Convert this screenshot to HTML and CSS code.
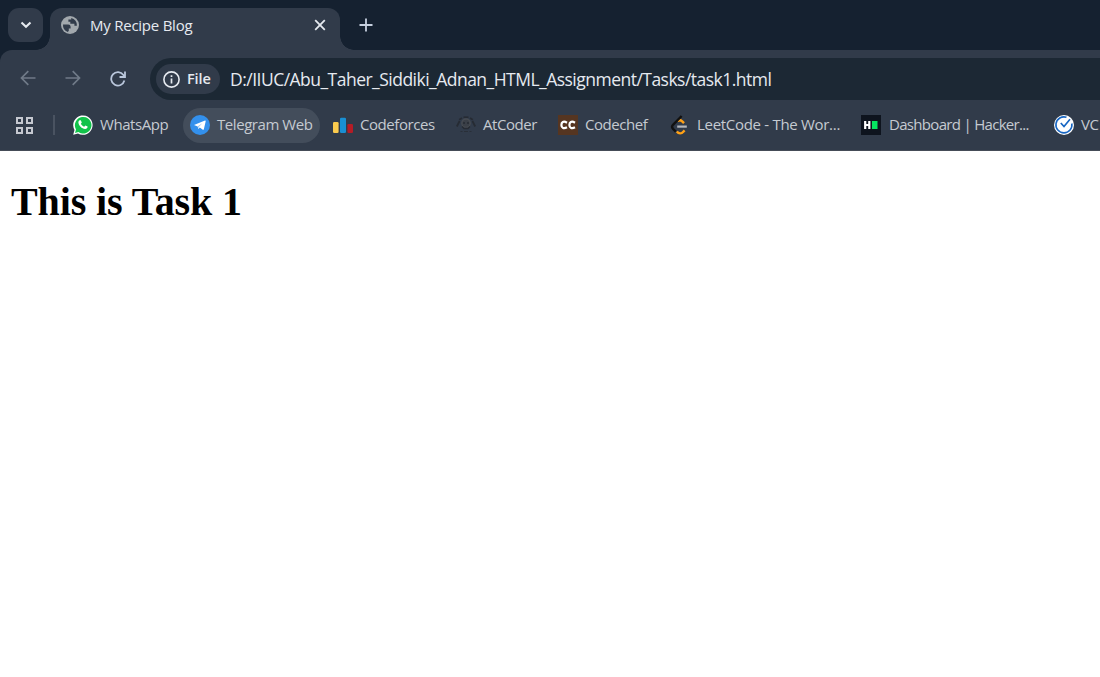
FILE: index.html
```html
<!DOCTYPE html>
<html lang="en">
<head>
<meta charset="utf-8">
<title>My Recipe Blog</title>
<link rel="stylesheet" href="styles.css">
</head>
<body>
<header class="browser">
  <div class="tabstrip">
    <button class="tab-search" aria-label="Search tabs">
      <svg width="12" height="8" viewBox="0 0 12 8"><path d="M1.5 1.5 6 5.8l4.5-4.3" fill="none" stroke="#e6eaf0" stroke-width="2.1"/></svg>
    </button>
    <div class="tab">
      <svg class="globe" width="18" height="18" viewBox="0 0 18 18"><circle cx="9" cy="9" r="9" fill="#a2a8ad"/><path d="M2 8.6h5.2c1.8 0 2.4.9 2.4 2.4v1.4H7.8v2.4l-1 1.2A7.3 7.3 0 0 1 2 8.6ZM10.2 2v1.6H7.4v2.2h1.9v2h4.1v2h2.5A7.3 7.3 0 0 0 10.2 2Z" fill="#313b4a"/></svg>
      <span class="tab-title">My Recipe Blog</span>
      <svg class="close" width="12" height="12" viewBox="0 0 12 12"><path d="m1.2 1.2 9.6 9.6m0-9.6-9.6 9.6" stroke="#e6eaf0" stroke-width="1.8"/></svg>
    </div>
    <svg class="new-tab" width="14" height="14" viewBox="0 0 14 14"><path d="M7 .5v13M.5 7h13" stroke="#c6d0df" stroke-width="1.8"/></svg>
  </div>

  <div class="toolbar">
    <svg class="nav" width="16" height="16" viewBox="0 0 16 16"><path d="M15.5 8H1.8M8.3 1.2 1.5 8l6.8 6.8" fill="none" stroke="#707a88" stroke-width="1.7"/></svg>
    <svg class="nav" width="16" height="16" viewBox="0 0 16 16"><path d="M.5 8h13.7M7.7 1.2 14.5 8l-6.8 6.8" fill="none" stroke="#707a88" stroke-width="1.7"/></svg>
    <svg class="reload" width="16" height="16" viewBox="0 0 16 16"><path d="M14.4 9.6A6.7 6.7 0 1 1 13.4 4L15 6M15 .5V6H9.5" fill="none" stroke="#bac7dc" stroke-width="1.8"/></svg>
    <div class="address">
      <span class="chip">
        <svg width="17" height="17" viewBox="0 0 17 17"><circle cx="8.5" cy="8.5" r="7.6" fill="none" stroke="#e6eaf0" stroke-width="1.6"/><path d="M8.5 7.5v5M8.5 4.3v1.8" stroke="#e6eaf0" stroke-width="1.7"/></svg>
        <span class="chip-label">File</span>
      </span>
      <span class="url">D:/IIUC/Abu_Taher_Siddiki_Adnan_HTML_Assignment/Tasks/task1.html</span>
    </div>
  </div>

  <nav class="bookmarks">
    <svg class="apps" width="19" height="19" viewBox="0 0 19 19" fill="none" stroke="#c5c8d0" stroke-width="2"><path d="M2 2h5v5H2zM12 2h5v5h-5zM2 12h5v5H2zM12 12h5v5h-5z"/></svg>
    <span class="divider"></span>
    <a class="bookmark whatsapp">
      <svg width="20" height="20" viewBox="0 0 20 20"><path d="M.2 19.8 1.5 15A9.7 9.7 0 1 1 5 18.5Z" fill="#fff"/><path d="m2 18 1-3.6A8.3 8.3 0 1 1 5.4 17Z" fill="#12c34b"/><path d="M6.8 5.3h1l1 2.3-.9 1.2c.7 1.4 1.8 2.4 3.3 3l1.1-1.3 2.3 1.1c.1 1.5-1 2.4-2.5 2.4-3.2-.3-6.6-3.7-6.7-6.6 0-.9.6-1.8 1.4-2.1Z" fill="#fff"/></svg>
      <span>WhatsApp</span>
    </a>
    <a class="bookmark telegram">
      <svg width="20" height="20" viewBox="0 0 20 20"><circle cx="10" cy="10" r="10" fill="#3390ec"/><path d="m4 10 11-4.5c.5-.2.8.2.7.7l-1.9 8.2c-.1.5-.6.6-1 .3l-3-2.1-1.5 1.5-.6-2.6Z" fill="#fff"/><path d="m7.8 11.3 4.5-3.1-3.5 3.9-.5 1.9Z" fill="#9bc8f5"/></svg>
      <span>Telegram Web</span>
    </a>
    <a class="bookmark codeforces">
      <svg width="20" height="20" viewBox="0 0 20 20"><rect y="7" width="5.6" height="11" rx="1.2" fill="#fbcb4e"/><rect x="7" y="2.7" width="6" height="15.3" rx="1.2" fill="#198fd3"/><rect x="14.4" y="9" width="5.6" height="9" rx="1.2" fill="#b51c26"/></svg>
      <span>Codeforces</span>
    </a>
    <a class="bookmark atcoder">
      <svg width="20" height="20" viewBox="0 0 20 20" fill="none" stroke="#262b33"><path d="M7.5 2.2h5" stroke-width="1.6"/><path d="M3.2 4.8 6 3M16.8 4.8 14 3M3.6 6 .8 11.5M16.4 6l2.8 5.5" stroke-width="1.8"/><circle cx="10" cy="8.2" r="4.2" fill="#3a3f47" stroke="#474b51" stroke-width="1.3"/><path d="M7 8h2M11 8h2" stroke-width="1.4"/><path d="m6 11.5 2 2h4l2-2" stroke-width="1.3"/><path d="M4.5 16.5h2M8 16.5h4M13.5 16.5h2" stroke="#292f38" stroke-width="1.2"/></svg>
      <span>AtCoder</span>
    </a>
    <a class="bookmark codechef">
      <svg width="20" height="20" viewBox="0 0 20 20"><path d="M0 0h20v20H0z" fill="#553521"/><path d="M9 7.7C5.3 5.5 3.4 7.3 3.4 9.9s2 4.5 5.6 2.4M17 7.7c-3.7-2.2-5.6-.4-5.6 2.2s2 4.5 5.6 2.4" fill="none" stroke="#fff" stroke-width="2.2"/></svg>
      <span>Codechef</span>
    </a>
    <a class="bookmark leetcode">
      <svg width="20" height="20" viewBox="0 0 20 20" fill="none" stroke-width="2.4"><path d="M7.4 6.2c1.7-1.5 3.5-1.2 4.8.1L14 8.2M6.8 16.6c2 2.4 4.7 2.3 6.5.2l1.3-1.4" stroke="#ffa116"/><path d="M11.6 1 3 9.8c-1.3 1.4-1.3 2.6 0 4l2.8 2.8" stroke="#111"/><path d="M7.2 11.6h9.6" stroke="#b5b7bb" stroke-width="2.2"/></svg>
      <span>LeetCode - The Wor...</span>
    </a>
    <a class="bookmark hackerrank">
      <svg width="20" height="20" viewBox="0 0 20 20"><path d="M0 0h20v20H0z" fill="#0e141e"/><path d="M4.2 6v8M8.3 6v8M4 10h4.5" stroke="#fff" stroke-width="2.2"/><path d="M11 6h5.5v8H11z" fill="#05e461"/></svg>
      <span>Dashboard | Hacker...</span>
    </a>
    <a class="bookmark vjudge">
      <svg width="20" height="20" viewBox="0 0 20 20" fill="none"><circle cx="10" cy="10" r="10" fill="#fff"/><path d="M12.5 2.3A8 8 0 1 0 17.8 8.5" stroke="#1766c3" stroke-width="1.6"/><path d="m6.8 8 3.2 3.5 6-7.2" stroke="#1766c3" stroke-width="1.7"/></svg>
      <span>VC</span>
    </a>
  </nav>
</header>
<main class="page"><h1>This is Task 1</h1></main>
</body>
</html>
```
FILE: styles.css
```css
* { box-sizing: border-box; }
body {
  margin: 0;
  height: 677px;
  overflow: hidden;
  background: #fff;
  font-family: "Open Sans", "Noto Sans", sans-serif;
}
svg { display: block; flex: none; }
span { white-space: nowrap; }
.browser { width: 1100px; height: 151px; overflow: hidden; background: #152130; }
.tabstrip { display: flex; height: 50px; padding: 8px 0 0 8px; }
.tab-search {
  display: grid;
  place-items: center;
  width: 35px;
  height: 34px;
  padding: 0;
  border: 0;
  border-radius: 11px;
  background: #313b4a;
}
.tab {
  position: relative;
  display: flex;
  align-items: center;
  width: 290px;
  height: 42px;
  margin-left: 7px;
  padding: 0 14px 8px 11px;
  border-radius: 12px 12px 0 0;
  background: #313b4a;
}
/* Concave feet where the tab meets the toolbar */
.tab::before, .tab::after {
  content: "";
  position: absolute;
  bottom: 0;
  width: 14px;
  height: 14px;
}
.tab::before { left: -14px; background: radial-gradient(circle at 0 0, transparent 13.5px, #313b4a 14px); }
.tab::after { right: -14px; background: radial-gradient(circle at 100% 0, transparent 13.5px, #313b4a 14px); }
.tab-title { margin-left: 11px; color: #e6eaf0; font-size: 15px; letter-spacing: -.24px; }
.close { margin-left: auto; }
.new-tab { margin: 10px 0 0 19px; }
.toolbar {
  display: flex;
  align-items: center;
  height: 50px;
  padding: 8px 0 0 20px;
  border-radius: 12px 0 0 0;
  background: #313b4a;
}
.nav { margin: 0 29px 2px 0; }
.reload { margin: 0 24px 1px 0; }
.address {
  display: flex;
  flex: 1;
  align-items: center;
  height: 42px;
  padding-left: 6px;
  border-radius: 21px 0 0 21px;
  background: #1c2834;
}
.chip {
  display: flex;
  align-items: center;
  width: 64px;
  height: 30px;
  padding-left: 7px;
  border-radius: 15px;
  background: #313b4a;
}
.chip-label { margin: 0 0 2px 7px; color: #e6eaf0; font-size: 14.5px; font-weight: 600; letter-spacing: -.1px; }
.url { margin: 0 0 1px 10px; color: #e6eaf0; font-size: 17.5px; letter-spacing: -.52px; }
.bookmarks {
  display: grid;
  grid-template-columns: 38px 13px 117px 143px 123px 102px 112px 191px 193px 90px;
  align-items: center;
  height: 51px;
  padding-left: 15px;
  border-bottom: 1px solid #454c57;
  background: #313b4a;
}
.divider { width: 2px; height: 20px; background: #4a5361; }
.bookmark {
  display: flex;
  align-items: center;
  gap: 7px;
  height: 35px;
  padding-left: 7px;
  color: #c5cad1;
  font-size: 15px;
  letter-spacing: -.44px;
}
.bookmark span { margin-bottom: 2px; }
.telegram { width: 137px; border-radius: 18px; background: #434d5b; }
.leetcode { letter-spacing: -.3px; }
.hackerrank { gap: 8px; letter-spacing: -.69px; }
.page h1 {
  margin: 0;
  padding: 28px 0 0 11px;
  font: bold 40px/46px "Liberation Serif", serif;
  letter-spacing: -.1px;
}
```
